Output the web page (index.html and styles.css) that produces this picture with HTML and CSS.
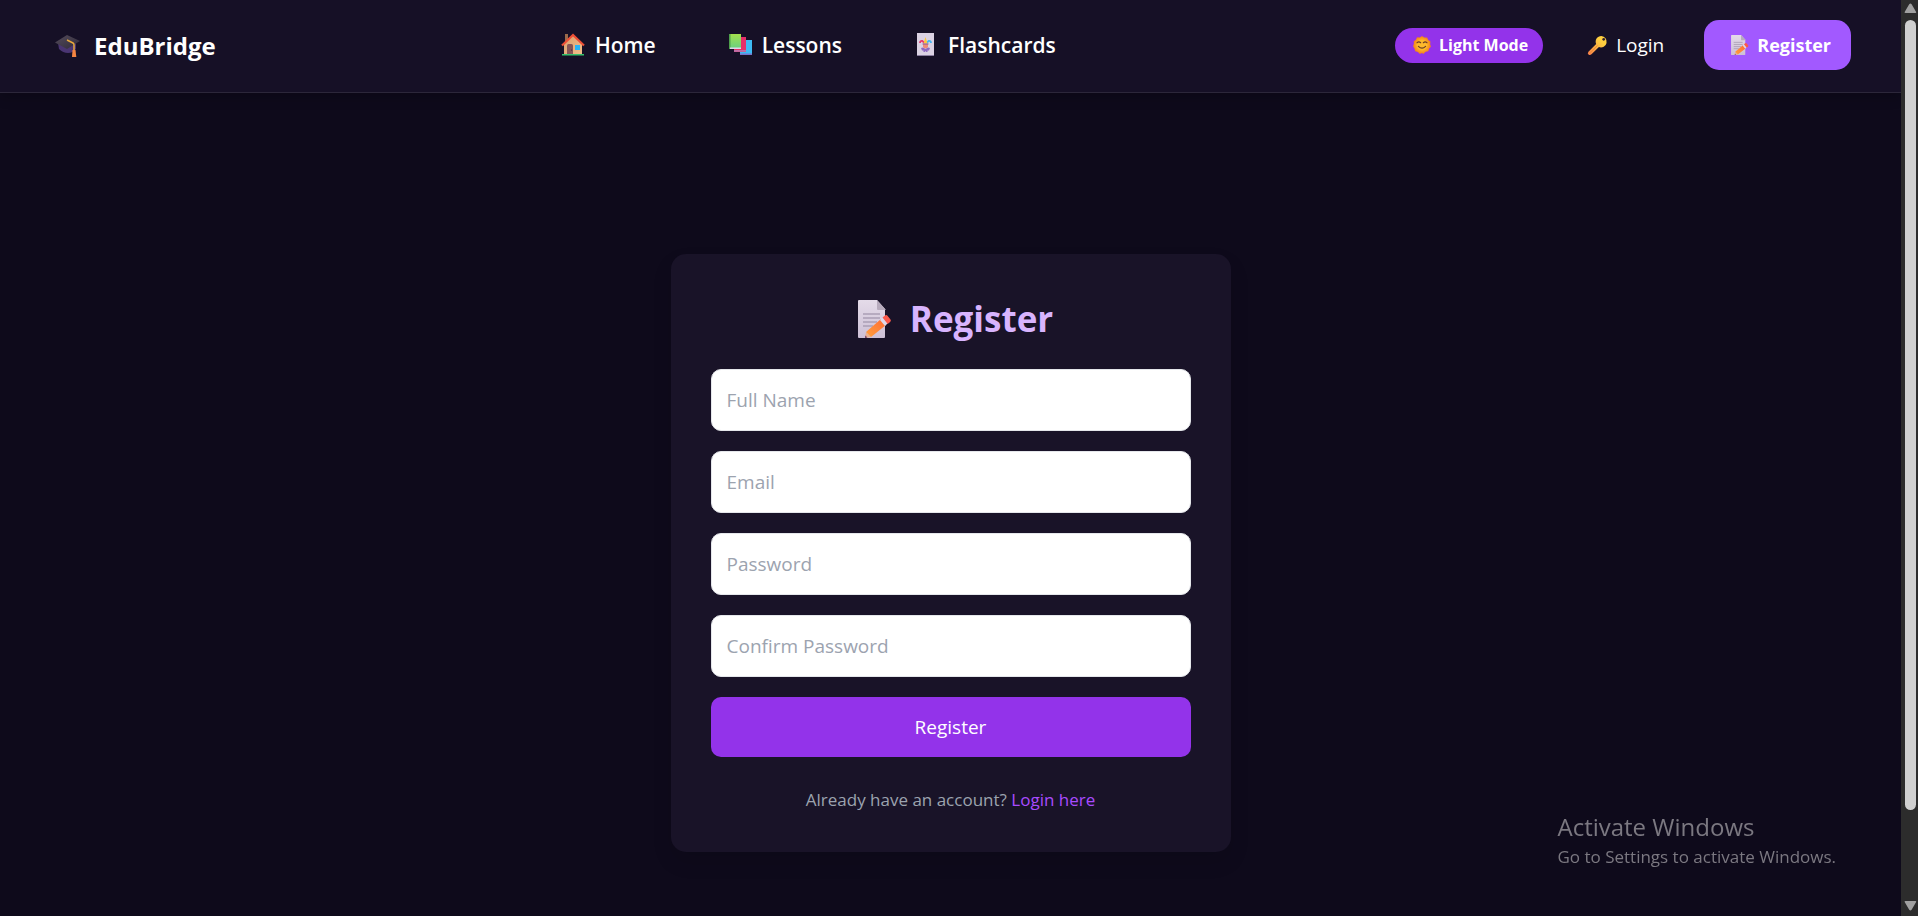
FILE: index.html
```html
<!DOCTYPE html>
<html lang="en">
<head>
<meta charset="utf-8">
<title>EduBridge - Register</title>
<link rel="stylesheet" href="styles.css">
</head>
<body>
<svg class="defs" width="0" height="0" aria-hidden="true">
  <defs>
    <linearGradient id="paper" x1="0" y1="0" x2="0" y2="1"><stop offset="0" stop-color="#e4dbe9"/><stop offset="1" stop-color="#cdc0d6"/></linearGradient>
    <linearGradient id="pencil" x1="1" y1="0" x2="0" y2="1"><stop offset="0" stop-color="#ff6a35"/><stop offset="1" stop-color="#ffa03c"/></linearGradient>
    <linearGradient id="key" x1="1" y1="0" x2="0" y2="1"><stop offset=".3" stop-color="#ffcf3f"/><stop offset="1" stop-color="#f57a4a"/></linearGradient>
    <linearGradient id="board" x1="0" y1="0" x2="1" y2="1"><stop offset="0" stop-color="#554c5c"/><stop offset="1" stop-color="#2f2a38"/></linearGradient>
    <linearGradient id="wall" x1="0" y1="0" x2="1" y2="1"><stop offset="0" stop-color="#d99c6c"/><stop offset="1" stop-color="#f2bf8a"/></linearGradient>
    <linearGradient id="green" x1="0" y1="0" x2="0" y2="1"><stop offset="0" stop-color="#a4e04c"/><stop offset="1" stop-color="#66cf84"/></linearGradient>
    <radialGradient id="sun"><stop offset="0" stop-color="#ffc933"/><stop offset=".7" stop-color="#fba022"/><stop offset="1" stop-color="#f07c1e"/></radialGradient>
    <symbol id="memo" viewBox="0 0 34 38">
      <path d="M1 0h18l8 9v28a1 1 0 0 1-1 1H1a1 1 0 0 1-1-1V1a1 1 0 0 1 1-1z" fill="url(#paper)"/>
      <path d="M19 0l9 10h-8a1 1 0 0 1-1-1z" fill="#b7abbd"/>
      <path d="M5 14h17M5 18h17M5 22h14M5 26h10" stroke="#aa9fb5" stroke-width="1.6"/>
      <path d="M7 38l1-6 5 5z" fill="#e9b08c"/>
      <path d="M7 38l.4-2.400 2 1.800z" fill="#6b3560"/>
      <path d="M8 32l15-13 5 6-15 12z" fill="url(#pencil)"/>
      <path d="M22 20l3-3 5 6-3 3z" fill="#ddd8ea"/>
      <path d="M24.500 17.500l2.500-2q1.500-1 2.700.500l2.800 3.500q1 1.400-.400 2.600L29.700 24z" fill="#fb5a4c"/>
    </symbol>
  </defs>
</svg>
<div class="window">
  <div class="page">
    <header class="navbar">
      <a class="brand" href="#">
        <svg class="icon-cap" viewBox="0 0 26 24" aria-hidden="true">
          <path d="M3 9l1 6q4 4 9 4t8-4V9z" fill="#4a3572"/>
          <path d="M0 8.500L12 1l13 6-13 8z" fill="url(#board)"/>
          <path d="M12 6l6 3q1 .5 1 2v6" fill="none" stroke="#e9a83c" stroke-width="1.500"/>
          <path d="M17.500 16h3l.800 7h-4.300z" fill="#f58442"/>
        </svg>
        <span>EduBridge</span>
      </a>
      <nav class="links">
        <a href="#">
          <svg class="icon-nav" viewBox="0 0 24 24" aria-hidden="true">
            <path d="M4 1h3v9H4z" fill="#9a6a4b"/>
            <path d="M12 2L3 11v11h18V11z" fill="url(#wall)"/>
            <path d="M1 12.500L12 2l11 10.500" fill="none" stroke="#ee4f36" stroke-width="2.200"/>
            <path d="M6 12.500q0-1.500 1.500-1.500h3q1.500 0 1.500 1.500V22H6z" fill="#865455"/>
            <circle cx="10.500" cy="17" r=".6" fill="#3a2430"/>
            <path d="M14 12h5v5h-5z" fill="#28b4f6"/>
            <path d="M1 21h22v1.500H1z" fill="#35c06c"/>
          </svg>
          <span>Home</span>
        </a>
        <a href="#">
          <svg class="icon-nav" viewBox="0 0 24 24" aria-hidden="true">
            <path d="M12 7h12v15H12z" fill="#3dbaf4"/><path d="M12 20.500h12V22H12z" fill="#7673cc"/>
            <path d="M6 4h12v15H6z" fill="#e52f68"/><path d="M6 17h12v1.800H6z" fill="#bd70a8"/>
            <path d="M1 1h12v15H1z" fill="url(#green)"/><path d="M1 1h1.500v15H1z" fill="#4f9f4c"/><path d="M2 14.500h11V16H2z" fill="#dcd8ea"/>
          </svg>
          <span>Lessons</span>
        </a>
        <a href="#">
          <svg class="icon-nav" viewBox="0 0 24 24" aria-hidden="true">
            <path d="M3 0h17v23H3z" fill="#dbd2e3"/><path d="M3 22h17v1H3z" fill="#8c7fa0"/>
            <path d="M6 10q0-2.500 2.500-2l2 2" fill="none" stroke="#e83a70" stroke-width="1.800"/>
            <path d="M17 10q0-2.500-2.500-2l-2 2" fill="none" stroke="#45b5f0" stroke-width="1.800"/>
            <path d="M9.500 10.500L11.500 4l2 6.500z" fill="#fcc63c"/>
            <path d="M9 11h5v3q-2.500 3-5 0z" fill="#f08a78"/>
            <path d="M8.500 11h6" stroke="#8a5498"/>
            <path d="M7 15l2-.5 2.500 1.500 2.500-1.500 2 .5-1 2.500h-1.500V19h-1.200l-.800-1-.800 1H9.500v-1.500H8z" fill="#8e6ac2"/>
          </svg>
          <span>Flashcards</span>
        </a>
      </nav>
      <div class="actions">
        <button class="mode" type="button">
          <svg class="icon-sun" viewBox="0 0 20 20" aria-hidden="true">
            <path d="M10 0l2.600 1.700 3.100-.100 1.300 2.800 2.400 1.700-.300 3 .900 2.900-2.100 2-.900 3-3 .600L11.500 20 10 19l-2.500 1L5.400 17.700l-3-.700-.800-3L0 11.500l1-2.800-.200-3L3.200 4.200 4.500 1.500l3 .200z" fill="url(#sun)"/>
            <circle cx="10" cy="10" r="6" fill="#fdb92c"/>
            <path d="M4.500 7.500q2-2 4 0M11.500 7.500q2-2 4 0M6 11.500q4 4 8 0" fill="none" stroke="#6b3c26" stroke-width="1.300" stroke-linecap="round"/>
          </svg>
          <span>Light Mode</span>
        </button>
        <a class="login" href="#">
          <svg class="icon-key" viewBox="0 0 22 22" aria-hidden="true">
            <path d="M15 1a6 6 0 1 1-2.500 11.600L5 20q-1.500 1.500-3.200.8Q0 19.500 1.500 17.500L9.600 9.500A6 6 0 0 1 15 1z" fill="url(#key)"/>
            <circle cx="17.500" cy="4.500" r="1.400" fill="#30202c"/>
            <path d="M3.500 18.500l7.500-7.500" stroke="#e98a38" stroke-width="1"/>
          </svg>
          <span>Login</span>
        </a>
        <a class="signup" href="#">
          <svg class="icon-memo" aria-hidden="true"><use href="#memo"/></svg>
          <span>Register</span>
        </a>
      </div>
    </header>
    <main class="content">
      <form class="card">
        <h1 class="title">
          <svg class="icon-memo-large" aria-hidden="true"><use href="#memo"/></svg>
          <span>Register</span>
        </h1>
        <div class="fields">
          <input type="text" placeholder="Full Name" aria-label="Full Name">
          <input type="email" placeholder="Email" aria-label="Email">
          <input type="password" placeholder="Password" aria-label="Password">
          <input type="password" placeholder="Confirm Password" aria-label="Confirm Password">
          <button class="submit" type="submit">Register</button>
        </div>
        <p class="hint">Already have an account? <a href="#">Login here</a></p>
      </form>
    </main>
  </div>
  <div class="scrollbar" aria-hidden="true">
    <svg viewBox="0 0 17 20"><path d="M4.500 13q-1.500 0-.7-1.300l4.400-7.500q1.200-1.300 2.400 0l4.400 7.500q.8 1.300-.7 1.300z" fill="#a0a0a0"/></svg>
    <div class="thumb"></div>
    <svg viewBox="0 0 17 20"><path d="M4.500 5q-1.500 0-.7 1.300l4.400 7.500q1.200 1.300 2.400 0l4.400-7.500q.8-1.300-.7-1.300z" fill="#a0a0a0"/></svg>
  </div>
</div>
<aside class="watermark">
  <p class="watermark-title">Activate Windows</p>
  <p class="watermark-text">Go to Settings to activate Windows.</p>
</aside>
</body>
</html>
```
FILE: styles.css
```css
* {
  box-sizing: border-box;
}

body {
  margin: 0;
  background: #0e0a1b;
  color: #fff;
  font-family: "Segoe UI", "Open Sans", "Noto Sans", sans-serif;
  font-size: 19px;
  line-height: 30px;
}

a {
  color: inherit;
  text-decoration: none;
}

p,
h1 {
  margin: 0;
}

button,
input {
  font: inherit;
}

svg {
  display: block;
  flex: none;
}

.defs {
  position: absolute;
}

.window {
  display: grid;
  grid-template-columns: 1fr 17px;
  min-height: 100vh;
}

.page {
  display: flex;
  flex-direction: column;
}

.navbar {
  display: flex;
  align-items: center;
  justify-content: space-between;
  padding: 20px 50px 22px 55px;
  background: #161026;
  border-bottom: 1px solid #2c273a;
  box-shadow: 0 4px 12px rgba(0, 0, 0, 0.2);
}

.brand {
  display: flex;
  align-items: center;
  gap: 13px;
  padding-top: 2px;
  font-size: 24px;
  font-weight: 700;
}

.links {
  display: flex;
  gap: 72px;
  padding-left: 6px;
  font-size: 21px;
  font-weight: 600;
}

.links a {
  display: flex;
  align-items: center;
  gap: 10px;
}

.actions {
  display: flex;
  align-items: center;
}

.mode {
  display: flex;
  align-items: center;
  gap: 8px;
  padding: 5px 15px 5px 18px;
  border: 0;
  border-radius: 18px;
  background: #9333ea;
  color: #fff;
  font-size: 16px;
  font-weight: 700;
  line-height: 25px;
}

.login {
  display: flex;
  align-items: center;
  gap: 8px;
  margin: 0 40px 0 44px;
}

.signup {
  display: flex;
  align-items: center;
  gap: 8px;
  padding: 10px 20px 10px 27px;
  border-radius: 15px;
  background: #a259ff;
  font-size: 18px;
  font-weight: 700;
}

.icon-cap {
  width: 26px;
  height: 24px;
}

.icon-nav {
  width: 24px;
  height: 24px;
}

.icon-sun {
  width: 18px;
  height: 18px;
}

.icon-key {
  width: 21px;
  height: 21px;
}

.icon-memo {
  width: 18px;
  height: 20px;
}

.icon-memo-large {
  width: 34px;
  height: 38px;
}

.content {
  flex: 1;
  display: flex;
  align-items: center;
  justify-content: center;
  padding: 161px 20px 64px;
}

.card {
  width: 100%;
  max-width: 560px;
  padding: 40px;
  border-radius: 15px;
  background: #191328;
  box-shadow: 0 10px 20px rgba(0, 0, 0, 0.1);
}

.title {
  display: flex;
  align-items: center;
  justify-content: center;
  gap: 18px;
  margin-bottom: 26px;
  padding-left: 10px;
  color: #d8b4fe;
  font-size: 35px;
  font-weight: 700;
  line-height: 49px;
}

.fields {
  display: flex;
  flex-direction: column;
  gap: 20px;
}

.fields input {
  width: 100%;
  height: 62px;
  padding: 15px;
  border: 1px solid #e5e7eb;
  border-radius: 10px;
  background: #fff;
  color: #111827;
}

.fields input::placeholder {
  color: #9ca3af;
  opacity: 1;
}

.submit {
  padding: 15px;
  border: 0;
  border-radius: 10px;
  background: #9333ea;
  color: #fff;
}

.hint {
  margin-top: 30px;
  color: #9ca3af;
  font-size: 17px;
  line-height: 25px;
  text-align: center;
}

.hint a {
  color: #a94bff;
}

.scrollbar {
  display: flex;
  flex-direction: column;
  background: #2c2c2c;
}

.scrollbar svg {
  width: 17px;
  height: 20px;
}

.thumb {
  flex: 1;
  margin: 0 2px 86px 4px;
  border-radius: 6px;
  background: #d0d0d0;
}

.watermark {
  position: fixed;
  right: 82px;
  bottom: 44px;
  color: #7b7881;
}

.watermark-title {
  font-size: 24px;
}

.watermark-text {
  font-size: 17px;
}
```
